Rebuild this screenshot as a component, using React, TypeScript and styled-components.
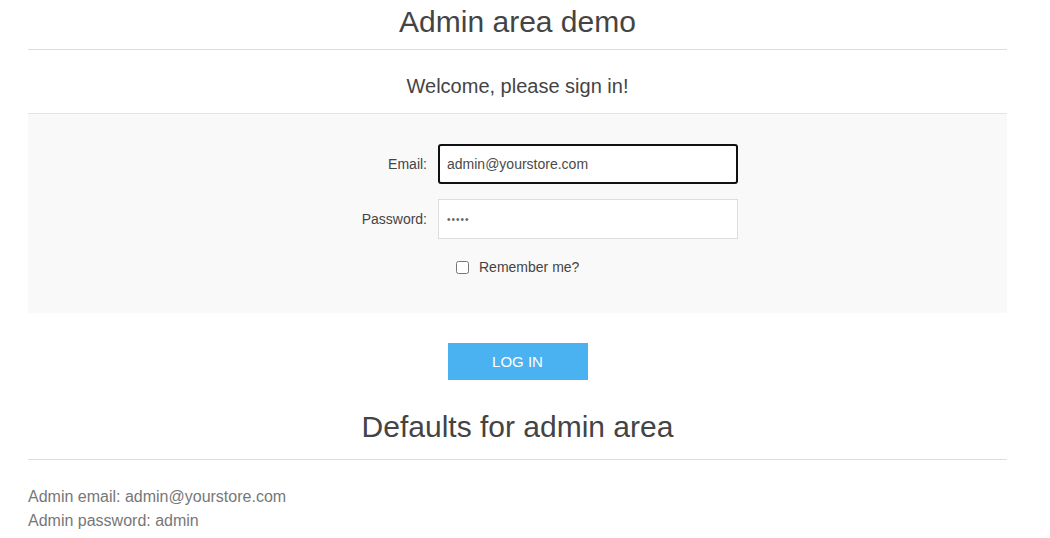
import React from "react";
import styled, { createGlobalStyle } from "styled-components";

const Global = createGlobalStyle`
  html { overflow-y: scroll; }
  html, body { margin: 0; padding: 0; background: #fff; }
  body { font-family: "Liberation Sans", Arial, sans-serif; color: #444; }
  * { box-sizing: border-box; }
`;

const Page = styled.div`
  width: 1035px;
  padding: 0 28px 120px;
`;

const Title = styled.h1<{ $top?: number; $bottom?: number }>`
  margin: 0;
  padding-top: ${(p) => p.$top ?? 0}px;
  padding-bottom: ${(p) => p.$bottom ?? 5}px;
  font-size: 30px;
  font-weight: normal;
  line-height: 44px;
  text-align: center;
  color: #444;
  border-bottom: 1px solid #ddd;
`;

const Subtitle = styled.h2`
  margin: 0;
  padding: 20px 0 11px;
  font-size: 20px;
  font-weight: normal;
  line-height: 32px;
  text-align: center;
  color: #444;
`;

const FormBox = styled.div`
  border-top: 1px solid #e4e4e4;
  background: #f9f9f9;
  padding: 30px 0 33px;
  display: flex;
  flex-direction: column;
  gap: 15px;
`;

const Row = styled.div`
  display: flex;
  align-items: center;
`;

const Label = styled.label`
  width: 399px;
  margin-right: 11px;
  text-align: right;
  font-size: 14px;
  color: #444;
`;

const Input = styled.input<{ $focused?: boolean; $secret?: boolean }>`
  width: 300px;
  height: 40px;
  padding: 0 ${(p) => (p.$focused ? 7 : 8)}px;
  font-family: "Liberation Sans", Arial, sans-serif;
  font-size: ${(p) => (p.$secret ? 10 : 14)}px;
  letter-spacing: ${(p) => (p.$secret ? 1 : 0)}px;
  color: ${(p) => (p.$secret ? "#666" : "#4a4a4a")};
  background: #fff;
  border: ${(p) => (p.$focused ? "2px solid #111" : "1px solid #ddd")};
  border-radius: ${(p) => (p.$focused ? 3 : 0)}px;
  outline: none;
`;

const CheckRow = styled.div`
  display: flex;
  align-items: center;
  padding-left: 428px;
  height: 26px;
`;

const Check = styled.input`
  width: 13px;
  height: 13px;
  margin: 0 10px 0 0;
`;

const CheckText = styled.label`
  font-size: 14px;
  color: #444;
`;

const Buttons = styled.div`
  display: flex;
  justify-content: center;
  padding: 30px 0 0;
`;

const Button = styled.button`
  width: 140px;
  height: 37px;
  border: none;
  background: #4ab2f1;
  color: #fff;
  font-family: "Liberation Sans", Arial, sans-serif;
  font-size: 15px;
  text-transform: uppercase;
  cursor: pointer;
`;

const Info = styled.div`
  padding-top: 25px;
  font-size: 16px;
  line-height: 24px;
  color: #777;
`;

export default function App() {
  return (
    <>
      <Global />
      <Page>
        <Title>Admin area demo</Title>
        <Subtitle>Welcome, please sign in!</Subtitle>
        <FormBox>
          <Row>
            <Label htmlFor="email">Email:</Label>
            <Input id="email" $focused type="text" defaultValue="admin@yourstore.com" />
          </Row>
          <Row>
            <Label htmlFor="pw">Password:</Label>
            <Input id="pw" $secret type="password" defaultValue="admin" />
          </Row>
          <CheckRow>
            <Check id="rem" type="checkbox" />
            <CheckText htmlFor="rem">Remember me?</CheckText>
          </CheckRow>
        </FormBox>
        <Buttons>
          <Button>Log in</Button>
        </Buttons>
        <Title $top={25} $bottom={10}>Defaults for admin area</Title>
        <Info>
          Admin email: admin@yourstore.com
          <br />
          Admin password: admin
        </Info>
      </Page>
    </>
  );
}
